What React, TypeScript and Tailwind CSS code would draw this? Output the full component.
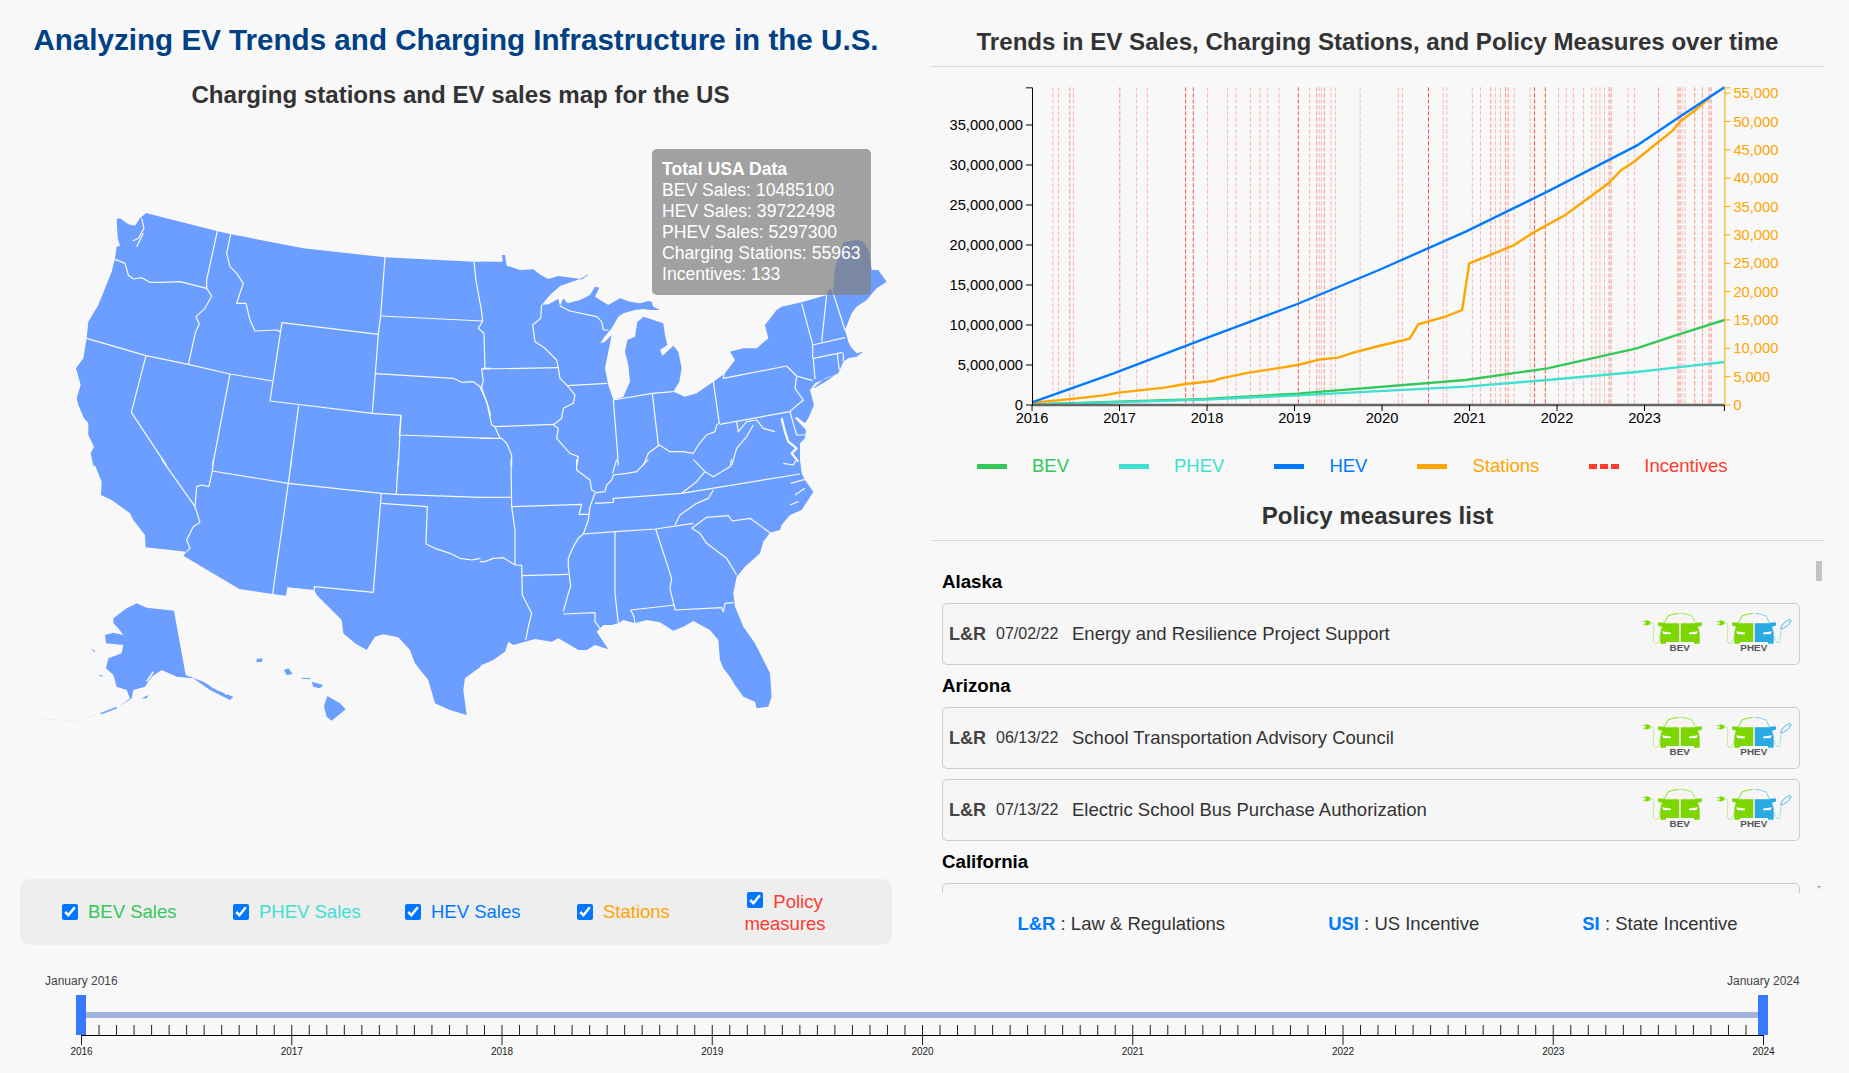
import React from "react";

const BEV = "#34c759";
const PHEV = "#40e0d0";
const HEV = "#007aff";
const STATIONS = "#ffa500";
const POLICY = "#ff3b30";

// map pieces, each traced in its own 3x frame
const NW_FILL =
  "M228 24 L440 78 L480 87 L700 130 L945 157 L1212 170 L1262 170 L1262 782 L70 782 L62 745 L72 725 L55 690 L55 655 L42 640 L25 600 L20 580 L32 540 L18 490 L40 460 L50 400 L55 350 L85 300 L125 200 L135 160 L140 125 L150 122 L143 100 L140 42 L150 40 L175 58 L195 62 L210 40Z";
const NW_LINES = [
  "M135 163 L165 175 L175 210 L190 222 L215 218 L240 232 L275 232 L330 230 L410 250",
  "M442 78 L410 225 L410 250 L425 273 L405 310 L378 335 L388 358 L377 380 L355 478",
  "M50 400 L228 452 L355 478 L480 507 L608 528",
  "M228 452 L184 622 L290 782",
  "M480 507 L428 782",
  "M482 87 L470 145 L480 185 L500 205 L520 235 L508 270 L500 295 L528 295 L540 345 L555 378 L620 375 L630 380",
  "M636 353 L925 388 L907 625 L600 588Z",
  "M945 157 L932 333 L925 388",
  "M932 333 L1238 348",
  "M917 506 L1150 520 L1175 532 L1210 530 L1235 548",
  "M907 625 L993 631 L988 690 L1262 700",
  "M686 602 L662 782",
  "M993 631 L985 782",
  "M1212 170 L1218 225 L1235 320 L1238 348 L1225 370 L1242 385 L1245 490 L1235 492 L1240 525 L1235 548 L1255 605 L1262 632",
  "M1240 490 L1262 490",
  "M215 40 L222 70 L205 100 L188 108 M220 85 L200 125",
];
const NE_FILL =
  "M0 170 L68 170 L66 150 L75 150 L80 182 L120 195 L160 193 L182 210 L205 222 L235 213 L275 218 L300 222 L240 243 L210 270 L185 300 L205 298 L235 282 L240 303 L250 280 L262 295 L300 285 L330 270 L345 245 L358 248 L345 275 L360 285 L385 300 L420 280 L450 290 L480 295 L505 288 L515 290 L520 305 L540 315 L510 315 L490 312 L465 315 L430 325 L415 335 L395 370 L370 400 L362 415 L375 410 L395 390 L385 440 L375 490 L385 540 L400 585 L430 575 L450 530 L445 480 L435 440 L442 405 L465 395 L472 350 L480 345 L490 335 L550 355 L555 390 L562 420 L540 435 L548 452 L580 422 L595 440 L605 490 L598 530 L580 560 L615 575 L650 565 L700 530 L735 505 L765 465 L750 440 L790 430 L830 430 L865 400 L855 360 L890 315 L905 305 L965 292 L1040 270 L1045 255 L1060 250 L1065 190 L1090 112 L1130 105 L1150 110 L1168 140 L1175 195 L1195 195 L1220 230 L1190 250 L1160 285 L1130 305 L1115 325 L1105 350 L1095 375 L1105 410 L1112 425 L1130 445 L1150 440 L1130 455 L1105 460 L1090 470 L1075 505 L1040 520 L1005 535 L990 555 L1002 600 L985 640 L975 655 L950 635 L945 640 L955 650 L978 675 L975 700 L960 715 L960 782 L0 782Z M1000 548 L1035 520 L1068 508 L1040 528 L1005 548Z M300 222 L325 208 L322 212 L303 224Z";
const NE_LINES = [
  "M185 300 L182 340 L158 360 L165 410 L195 430 L230 465 L235 490 L240 520 L262 542 L285 570 L280 595 L250 610 L245 640 L220 660 L235 670 L230 700 L270 745 L295 755 L290 782",
  "M5 492 L235 488",
  "M45 665 L222 658",
  "M0 545 L20 590 L35 660 L45 665 L60 700",
  "M0 700 L65 700 L80 715 L95 750 L95 782",
  "M262 542 L382 535",
  "M240 303 L270 318 L350 335 L365 350 L370 375 L385 375",
  "M400 585 L412 735 L415 782",
  "M517 565 L535 720",
  "M400 585 L517 565 L580 560",
  "M700 530 L718 655 L710 660 L705 680 L680 690 L655 720 L640 745 L610 740 L570 740 L538 720 L505 745 L490 782",
  "M732 505 L730 520 L920 483 L950 513 L998 527",
  "M720 658 L930 620",
  "M950 515 L945 550 L970 585 L935 615 L930 620",
  "M1000 460 L1005 522",
  "M965 295 L985 370 L998 418 L998 460",
  "M1040 270 L1025 410",
  "M1055 250 L1095 375",
  "M998 420 L1095 398",
  "M1000 460 L1088 442",
  "M1072 447 L1078 495 M1090 445 L1090 468",
  "M930 620 L950 690 L975 690",
  "M770 650 L775 680 L800 650 L830 645 L850 670 L885 680",
  "M820 660 L800 695 L770 730 L755 782",
];
const SW_FILL =
  "M188 -2 L215 65 L213 105 L245 120 L300 160 L310 180 L345 225 L347 262 L470 275 L460 287 L628 387 L728 402 L768 407 L772 382 L853 390 L860 405 L915 460 L935 480 L940 520 L975 550 L1010 570 L1035 530 L1060 523 L1105 532 L1140 570 L1155 610 L1195 660 L1215 730 L1260 750 L1310 765 L1300 690 L1305 655 L1352 620 L1352 -2Z";
const SW_LINES = [
  "M547 33 L775 70 L1054 100 L1099 103 L1352 112",
  "M395 -2 L495 140",
  "M550 -2 L547 33 L537 80 L515 75 L500 80 L495 140 L510 187 L490 200 L470 240 L480 265 L470 275",
  "M775 70 L728 402",
  "M1054 100 L1030 397 L853 380 L853 390",
  "M1054 130 L1192 140 L1188 252 L1215 265 L1260 280 L1290 295 L1325 300 L1352 295",
  "M785 -2 L775 70",
  "M1105 -2 L1099 103",
];
const ALASKA =
  "M250 475 L290 445 L320 430 L350 443 L432 452 L467 645 L520 665 L560 690 L610 710 L600 720 L540 690 L490 655 L440 650 L395 630 L365 650 L345 680 L310 690 L305 715 L265 740 L300 715 L290 690 L260 680 L250 645 L228 625 L235 595 L275 580 L280 555 L228 550 L225 525 L250 518 L280 525 L265 505 L250 490Z";
const HAWAII = [
  "M680 597 L697 595 L697 605 L680 607Z",
  "M762 630 L775 625 L788 642 L770 645Z",
  "M845 665 L880 675 L870 685 L850 680Z",
  "M815 653 L840 655 L840 658 L815 656Z",
  "M892 708 L930 730 L947 748 L905 782 L890 770 L882 738Z",
  "M210 760 L260 740 L262 745 L215 763Z",
  "M205 645 L217 645 L217 650Z",
  "M180 565 L195 572 L195 577Z",
  "M335 715 L355 705 L350 715Z",
];
const SE_FILL =
  "M-2 -2 L960 -2 L965 40 L975 60 L1000 95 L965 150 L930 165 L905 195 L900 210 L870 218 L850 245 L840 280 L795 320 L770 350 L760 400 L765 440 L790 500 L825 550 L870 640 L875 710 L865 740 L830 745 L825 725 L790 710 L765 675 L750 650 L730 625 L720 600 L715 540 L690 510 L640 483 L610 500 L580 512 L540 487 L500 480 L465 490 L430 480 L415 490 L395 495 L370 495 L350 515 L385 568 L345 555 L320 570 L295 570 L270 555 L235 535 L215 545 L165 537 L100 555 L85 545 L75 575 L40 600 L-2 618Z";
const SE_LINES = [
  "M0 305 L15 305 L40 295 L70 293 L105 315 L125 316 L127 405 L155 460 L145 500 L137 540",
  "M93 -2 L95 140 L105 210 L105 315",
  "M95 140 L305 133 L297 163 L327 163",
  "M127 347 L265 343",
  "M-2 112 L93 112",
  "M345 100 L330 140 L325 180 L310 222 L295 235 L280 260 L265 295 L265 320 L272 380 L265 400 L250 455",
  "M250 462 L345 458 L345 485 L360 505",
  "M405 215 L405 400 L415 490",
  "M310 222 L405 215 L527 207 L640 190",
  "M345 130 L400 127 L400 115 L605 100 L960 42",
  "M527 207 L575 355 L570 385 L585 450 L725 443 L730 455 L735 430 L760 428",
  "M585 435 L452 450 L462 470 L465 490",
  "M635 205 L660 220 L680 250 L740 295 L770 345",
  "M635 205 L680 172 L745 167 L757 183 L810 175 L870 218",
  "M700 90 L685 115 L650 130 L600 165 L585 195",
  "M605 100 L650 65 L675 35",
  "M640 -2 L675 35 L700 50 L750 20 L755 -2",
  "M290 -2 L290 30 L330 60 L335 90 L350 98 L375 95 L380 75 L395 60 L400 45 L440 40 L470 35 L505 -2",
  "M410 -2 L398 40",
  "M910 10 L940 15 L950 -2",
  "M932 70 L975 58 M945 105 L975 85 M930 135 L955 125",
];

function UsMap() {
  return (
    <svg viewBox="0 0 912 620" className="block h-[620px] w-[912px]">
      <g fill="#6b9eff" stroke="none">
        <path transform="translate(70 75) scale(0.3333)" d={NW_FILL} />
        <path transform="translate(480 75) scale(0.3333)" d={NE_FILL} fillRule="evenodd" />
        <path transform="translate(30 330) scale(0.3333)" d={SW_FILL} />
        <path transform="translate(30 330) scale(0.3333)" d={ALASKA} />
        {HAWAII.map((d) => (
          <path key={d} transform="translate(30 330) scale(0.3333)" d={d} />
        ))}
        <path transform="translate(480 330) scale(0.3333)" d={SE_FILL} />
      </g>
      <g fill="none" stroke="#fff" strokeWidth="3.6" strokeLinejoin="round" strokeOpacity="0.95">
        <g transform="translate(70 75) scale(0.3333)">
          {NW_LINES.map((d) => <path key={d} d={d} />)}
        </g>
        <g transform="translate(480 75) scale(0.3333)">
          {NE_LINES.map((d) => <path key={d} d={d} />)}
          <path d="M905 640 L915 680 L925 710 L950 730 L935 745 L955 770" strokeWidth="7" />
        </g>
        <g transform="translate(30 330) scale(0.3333)">
          {SW_LINES.map((d) => <path key={d} d={d} />)}
          {/* broken-up panhandle islands */}
          <path d="M525 650 L550 685 M545 655 L570 692 M565 675 L590 705" />
          <path d="M370 635 L350 665" strokeWidth="5" />
        </g>
        <g transform="translate(480 330) scale(0.3333)">
          {SE_LINES.map((d) => <path key={d} d={d} />)}
        </g>
      </g>
      {/* faint end of the Aleutian chain */}
      <path
        transform="translate(30 330) scale(0.3333)"
        d="M20 775 L150 785 L205 762"
        fill="none"
        stroke="#6b9eff"
        strokeOpacity="0.25"
        strokeWidth="3"
        strokeDasharray="6 10"
      />
    </svg>
  );
}

// chart points are read off a crop that is 1.96x wide and 3x tall
const cx = (z: number) => z / 1.96 - 1;
const cy = (z: number) => z / 3 - 7;
const pts = (list: number[][]) => list.map(([x, y]) => `${cx(x)},${cy(y)}`).join(" ");

const HEV_LINE = [[200, 1027], [360, 940], [540, 835], [720, 732], [880, 630], [1050, 515], [1210, 395], [1385, 257], [1460, 180], [1557, 82]];
const STATIONS_LINE = [[200, 1028], [270, 1018], [340, 1006], [370, 998], [460, 983], [500, 972], [555, 963], [570, 955], [625, 938], [680, 925], [720, 915], [765, 898], [800, 893], [830, 878], [880, 858], [940, 836], [957, 793], [1010, 770], [1043, 750], [1057, 610], [1095, 587], [1145, 555], [1180, 520], [1245, 465], [1330, 370], [1355, 330], [1380, 305], [1430, 243], [1455, 213], [1470, 185], [1500, 150], [1530, 110]];
const BEV_LINE = [[200, 1033], [540, 1017], [720, 1001], [1050, 960], [1210, 925], [1385, 865], [1460, 827], [1557, 780]];
const PHEV_LINE = [[200, 1034], [540, 1019], [720, 1006], [1050, 980], [1210, 960], [1385, 936], [1460, 923], [1557, 906]];

const STRONG = [501, 516, 722, 977, 1185, 1206];
const MEDIUM = [274, 372, 758, 773, 1099, 1128, 1133, 1331, 1335, 1428, 1466, 1470, 1499, 1514, 1527, 1531];
const FAINT = [241, 252, 281, 405, 426, 544, 583, 600, 628, 647, 662, 684, 744, 763, 767, 786, 795, 843, 918, 926, 1006, 1013, 1063, 1079, 1108, 1118, 1145, 1176, 1232, 1247, 1261, 1281, 1297, 1305, 1313, 1322, 1368, 1381, 1474, 1480];

const LEFT_TICKS = [0, 5, 10, 15, 20, 25, 30, 35];
const RIGHT_TICKS = [0, 5, 10, 15, 20, 25, 30, 35, 40, 45, 50, 55];
const YEARS = [2016, 2017, 2018, 2019, 2020, 2021, 2022, 2023];

function TrendChart() {
  const x0 = cx(200);
  const x1 = cx(1557);
  const yTop = cy(82);
  const yBase = cy(1035);
  return (
    <svg viewBox="0 0 893 380" className="block h-[380px] w-[893px] text-[14.7px]">
      {FAINT.map((z) => (
        <line key={z} x1={cx(z)} x2={cx(z)} y1={yTop} y2={yBase} stroke="#ff3b30" strokeOpacity="0.35" strokeDasharray="4 2" />
      ))}
      {MEDIUM.map((z) => (
        <line key={z} x1={cx(z)} x2={cx(z)} y1={yTop} y2={yBase} stroke="#ff3b30" strokeOpacity="0.55" strokeDasharray="4 2" />
      ))}
      {STRONG.map((z) => (
        <line key={z} x1={cx(z)} x2={cx(z)} y1={yTop} y2={yBase} stroke="#ff3b30" strokeOpacity="0.9" strokeDasharray="4 2" />
      ))}
      <polyline points={pts(BEV_LINE)} fill="none" stroke={BEV} strokeWidth="2.4" />
      <polyline points={pts(PHEV_LINE)} fill="none" stroke={PHEV} strokeWidth="2.4" />
      <polyline points={pts(STATIONS_LINE)} fill="none" stroke={STATIONS} strokeWidth="2.4" />
      <polyline points={pts(HEV_LINE)} fill="none" stroke={HEV} strokeWidth="2.4" />

      <line x1={x0} x2={x1} y1={yBase} y2={yBase} stroke="#666" strokeWidth="2.5" />
      <path d={`M${x0 - 6} ${yTop + 0.5} H${x0 + 0.5} V${yBase}`} fill="none" stroke="#000" />
      <path d={`M${x1 + 6} ${yTop + 0.5} H${x1 + 0.5} V${yBase}`} fill="none" stroke={STATIONS} />

      {LEFT_TICKS.map((v) => {
        const y = yBase - v * 8;
        return (
          <g key={v}>
            <line x1={x0 - 6} x2={x0} y1={y} y2={y} stroke="#000" />
            <text x={x0 - 9} y={y + 5} textAnchor="end" fill="#000">
              {v === 0 ? "0" : `${v},000,000`}
            </text>
          </g>
        );
      })}
      {RIGHT_TICKS.map((v) => {
        const y = yBase - v * 5.67;
        return (
          <g key={v}>
            <line x1={x1} x2={x1 + 6} y1={y} y2={y} stroke={STATIONS} />
            <text x={x1 + 9} y={y + 5} fill={STATIONS}>
              {v === 0 ? "0" : `${v},000`}
            </text>
          </g>
        );
      })}
      {YEARS.map((year, i) => {
        const x = x0 + i * 87.5;
        return (
          <g key={year}>
            <line x1={x} x2={x} y1={yBase} y2={yBase + 6} stroke="#000" />
            <text x={x} y={yBase + 18} textAnchor="middle" fill="#000">
              {year}
            </text>
          </g>
        );
      })}
      <line x1={x1} x2={x1} y1={yBase} y2={yBase + 6} stroke="#000" />
    </svg>
  );
}

function CarIcon({ hybrid }: { hybrid?: boolean }) {
  const right = hybrid ? "#29abe2" : "#7ed600";
  const lightRight = hybrid ? "#7fcdee" : "#a5e354";
  return (
    <g>
      {/* plug and cable */}
      <path d="M65 68 H76 M65 76 H76" stroke="#7ed600" strokeWidth="2.5" />
      <path d="M74 63 L88 68 V76 L74 81Z" fill="#7ed600" />
      <path d="M88 72 H94 Q100 74 98 100 Q94 135 105 135 Q116 132 118 108" fill="none" stroke="#a5e354" strokeWidth="2" />
      {/* left half */}
      <path d="M175 73 H131 L127 71 H111 V80 L123 84 L118 100 V135 H135 V130 H175Z M122 97 L150 101 L150 106 L128 106Z" fill="#7ed600" fillRule="evenodd" />
      <path d="M131 72 L140 52 Q150 45 175 43" fill="none" stroke="#8fdc1c" strokeWidth="3" />
      {/* right half */}
      <path d="M180 73 H224 L228 71 H244 V80 L232 84 L237 100 V135 H220 V130 H180Z M233 97 L205 101 L205 106 L227 106Z" fill={right} fillRule="evenodd" />
      <path d="M224 72 L215 52 Q205 45 180 43" fill="none" stroke={lightRight} strokeWidth="3" />
    </g>
  );
}

function BevBadge() {
  return (
    <svg viewBox="60 30 190 130" className="h-[43px] w-[63px] shrink-0">
      <CarIcon />
      <text x="177" y="158" textAnchor="middle" fontSize="30" fontWeight="700" fill="#555">BEV</text>
    </svg>
  );
}

function PhevBadge() {
  return (
    <svg viewBox="60 30 235 130" className="h-[43px] w-[78px] shrink-0">
      <CarIcon hybrid />
      <path d="M237 110 Q246 138 254 130 Q260 110 260 88" fill="none" stroke="#7fcdee" strokeWidth="2" />
      <path d="M258 88 L266 74 L284 62 L290 65 L280 80 L262 90Z" fill="none" stroke="#29abe2" strokeWidth="2.5" />
      <text x="177" y="158" textAnchor="middle" fontSize="30" fontWeight="700" fill="#555">PHEV</text>
    </svg>
  );
}

function PolicyCard({ date, title }: { date: string; title: string }) {
  return (
    <div className="flex h-[62px] items-center rounded-[5px] border border-[#cccccc] bg-[#f6f6f6] pl-[6px] pr-[6px]">
      <span className="w-[47px] shrink-0 text-[18px] font-bold text-[#444444]">L&amp;R</span>
      <span className="w-[76px] shrink-0 text-[16px] leading-[20px] text-[#333333]">{date}</span>
      <span className="text-[18.5px] text-[#333333]">{title}</span>
      <div className="-mt-2 ml-auto flex items-center gap-[11px]">
        <BevBadge />
        <PhevBadge />
      </div>
    </div>
  );
}

function StateName({ name }: { name: string }) {
  return <h3 className="text-[18.7px] font-bold leading-[22px] text-black">{name}</h3>;
}

function Toggle({ label, color, width }: { label: string; color: string; width: string }) {
  return (
    <label className={`flex items-center gap-[10px] text-[18.5px] ${width}`} style={{ color }}>
      <input type="checkbox" defaultChecked className="h-4 w-4" />
      {label}
    </label>
  );
}

function Timeline() {
  const left = 81.5;
  const right = 1763.5;
  const year = (right - left) / 8;
  const months = Array.from({ length: 97 }, (_, i) => left + (i * year) / 12);
  return (
    <svg viewBox="0 0 1849 113" className="block h-[113px] w-[1849px]">
      <text x="45" y="25" fontSize="12" fill="#444">January 2016</text>
      <text x="1727" y="25" fontSize="12" fill="#444">January 2024</text>
      <rect x="81" y="52" width="1682" height="6" fill="#9fb3dc" />
      {months.map((x, i) => (
        <line key={i} x1={x} x2={x} y1={65} y2={i % 12 === 0 ? 85 : 75} stroke="#222" strokeWidth="1" />
      ))}
      <line x1={left} x2={right} y1={75.5} y2={75.5} stroke="#000" strokeWidth="1" />
      {Array.from({ length: 9 }, (_, i) => (
        <text key={i} x={left + i * year} y={95} textAnchor="middle" fontSize="10" fill="#222">
          {2016 + i}
        </text>
      ))}
      <rect x="76" y="35" width="10" height="40" fill="#3779ff" />
      <rect x="1758" y="35" width="10" height="40" fill="#3779ff" />
    </svg>
  );
}

export default function App() {
  return (
    <div className="h-[1073px] w-[1849px] overflow-hidden bg-[#f8f8f8] [font-family:'Liberation_Sans',Arial,sans-serif]">
      <div className="flex h-[960px]">
        {/* map column */}
        <div className="w-[912px] pt-[23px]">
          <h1 className="text-center text-[29.6px] font-bold leading-[34px] text-[#004085]">
            Analyzing EV Trends and Charging Infrastructure in the U.S.
          </h1>
          <h2 className="mt-[23px] pl-[9px] text-center text-[24.1px] font-bold leading-[30px] text-[#333333]">
            Charging stations and EV sales map for the US
          </h2>
          <div className="relative mt-[20px]">
            <UsMap />
            <div className="absolute left-[652px] top-[19px] h-[146px] w-[219px] rounded-[5px] bg-[rgba(128,128,128,0.72)] p-[10px] text-[17.6px] leading-[21px] text-white">
              <div className="font-bold">Total USA Data</div>
              <div>BEV Sales: 10485100</div>
              <div>HEV Sales: 39722498</div>
              <div>PHEV Sales: 5297300</div>
              <div className="whitespace-nowrap">Charging Stations: 55963</div>
              <div>Incentives: 133</div>
            </div>
          </div>
          <div className="ml-[20px] mt-[129px] flex h-[66px] w-[872px] items-center rounded-[10px] bg-[#eeeeee] pl-[42px]">
            <Toggle label="BEV Sales" color={BEV} width="w-[171px]" />
            <Toggle label="PHEV Sales" color={PHEV} width="w-[172px]" />
            <Toggle label="HEV Sales" color={HEV} width="w-[172px]" />
            <Toggle label="Stations" color={STATIONS} width="w-[152px]" />
            <label className="w-[112px] pt-[2px] text-center text-[18.5px] leading-[22px]" style={{ color: POLICY }}>
              <input type="checkbox" defaultChecked className="mr-[10px] h-4 w-4" />
              Policy measures
            </label>
          </div>
        </div>

        {/* trends column */}
        <div className="ml-[19px] w-[893px]">
          <h2 className="border-b border-[#d8d8d8] pb-[7px] pt-[25px] text-center text-[24.1px] font-bold leading-[34px] text-[#333333]">
            Trends in EV Sales, Charging Stations, and Policy Measures over time
          </h2>
          <TrendChart />
          <div className="mt-[8px] flex h-[22px] items-center gap-[50px] pl-[46px] text-[18.5px]">
            {[
              { label: "BEV", color: BEV },
              { label: "PHEV", color: PHEV },
              { label: "HEV", color: HEV },
              { label: "Stations", color: STATIONS },
            ].map((item) => (
              <div key={item.label} className="flex items-center gap-[25px]" style={{ color: item.color }}>
                <span className="h-[5px] w-[30px]" style={{ backgroundColor: item.color }} />
                {item.label}
              </div>
            ))}
            <div className="flex items-center gap-[25px]" style={{ color: POLICY }}>
              <span className="flex w-[30px] justify-between">
                <span className="h-[5px] w-[8px] bg-[#ff3b30]" />
                <span className="h-[5px] w-[8px] bg-[#ff3b30]" />
                <span className="h-[5px] w-[8px] bg-[#ff3b30]" />
              </span>
              Incentives
            </div>
          </div>
          <h2 className="mt-[22px] border-b border-[#d8d8d8] pb-[7px] text-center text-[24.1px] font-bold leading-[34px] text-[#333333]">
            Policy measures list
          </h2>
          <div className="relative h-[352px] overflow-hidden">
            <div className="flex flex-col gap-[10px] pl-[11px] pr-[24px] pt-[30px]">
              <StateName name="Alaska" />
              <PolicyCard date="07/02/22" title="Energy and Resilience Project Support" />
              <StateName name="Arizona" />
              <PolicyCard date="06/13/22" title="School Transportation Advisory Council" />
              <PolicyCard date="07/13/22" title="Electric School Bus Purchase Authorization" />
              <StateName name="California" />
              <div className="h-[62px] rounded-[5px] border border-[#cccccc] bg-[#f6f6f6]" />
            </div>
            {/* scrollbar */}
            <div className="absolute right-[2px] top-[20px] h-[20px] w-[6px] bg-[#c4c4c4]" />
            <div className="absolute bottom-[4px] right-[3px] h-0 w-0 border-x-[2px] border-t-[3px] border-x-transparent border-t-[#aaaaaa]" />
          </div>
          <div className="mt-[20px] flex justify-center gap-[103px] text-[18.5px] leading-[22px] text-[#333333]">
            <div><span className="font-bold text-[#007aff]">L&amp;R</span> : Law &amp; Regulations</div>
            <div><span className="font-bold text-[#007aff]">USI</span> : US Incentive</div>
            <div><span className="font-bold text-[#007aff]">SI</span> : State Incentive</div>
          </div>
        </div>
      </div>
      <Timeline />
    </div>
  );
}
